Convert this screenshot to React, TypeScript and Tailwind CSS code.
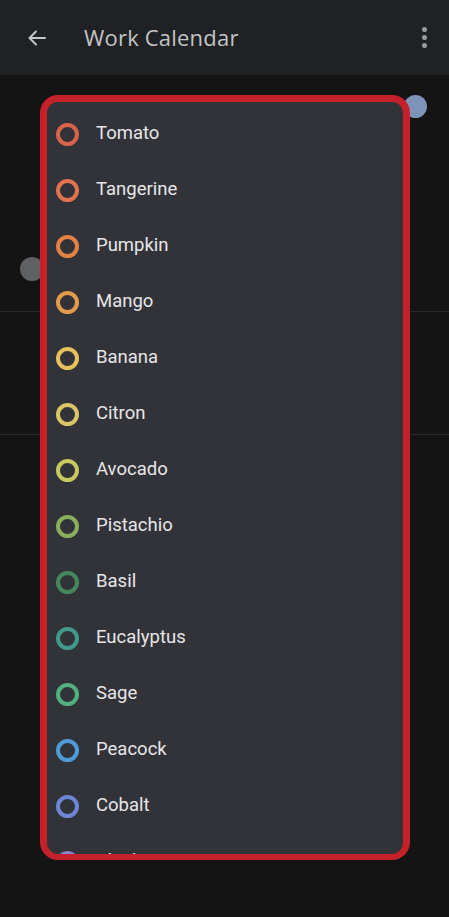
import React from "react";

const colors: [string, string][] = [
  ["Tomato", "#d9624a"],
  ["Tangerine", "#e2734f"],
  ["Pumpkin", "#e38044"],
  ["Mango", "#e39a4b"],
  ["Banana", "#e8c15c"],
  ["Citron", "#dcc566"],
  ["Avocado", "#c6c95e"],
  ["Pistachio", "#88b05c"],
  ["Basil", "#43895c"],
  ["Eucalyptus", "#3f9a8d"],
  ["Sage", "#50b07f"],
  ["Peacock", "#4d9bd8"],
  ["Cobalt", "#6d86d8"],
  ["Blueberry", "#8686cc"],
];

export default function App() {
  return (
    <div
      className="relative w-[449px] h-[917px] overflow-hidden bg-[#141414]"
      style={{ fontFamily: "Roboto, 'Noto Sans', sans-serif" }}
    >
      {/* Header */}
      <div className="h-[75px] bg-[#202124] flex items-center">
        <div className="w-[74px] flex items-center justify-center">
          <svg width="24" height="24" viewBox="0 0 24 24" fill="none">
            <path d="M20 12H5M11 5.5L4.5 12L11 18.5" stroke="#c4c7c5" strokeWidth="2" strokeLinecap="round" strokeLinejoin="round" />
          </svg>
        </div>
        <div className="ml-[10px] flex-1 text-[22px] text-[#c2c4c3] tracking-[0.2px]" style={{ fontFamily: "'Open Sans', Roboto, sans-serif" }}>
          Work Calendar
        </div>
        <div className="w-[48px] flex flex-col items-center gap-[3px] pr-[2px]">
          <span className="block w-[5px] h-[5px] rounded-full bg-[#9a9c9b]" />
          <span className="block w-[5px] h-[5px] rounded-full bg-[#9a9c9b]" />
          <span className="block w-[5px] h-[5px] rounded-full bg-[#9a9c9b]" />
        </div>
      </div>

      {/* Underlying page */}
      <div className="flex flex-col">
        <div className="h-[237px] border-b border-[#2a2a2b] flex flex-col">
          <div className="flex justify-end pt-[20px] pr-[22px]">
            <span className="block w-[23px] h-[23px] rounded-full bg-[#7e93b8]" />
          </div>
          <div className="flex pt-[139px] pl-[20px]">
            <span className="block w-[24px] h-[24px] rounded-full bg-[#5f6063]" />
          </div>
        </div>
        <div className="h-[123px] border-b border-[#2a2a2b]" />
      </div>

      {/* Popup with highlight */}
      <div className="absolute left-[40px] top-[95px] w-[370px] h-[765px] rounded-[18px] border-[7px] border-b-[6px] border-[#c4212b] bg-[#323338] overflow-hidden">
        <div className="flex flex-col pt-[4px]">
          {colors.map(([name, c]) => (
            <div key={name} className="h-[56px] flex items-center shrink-0">
              <span
                className="block w-[23px] h-[23px] rounded-full border-[4px] ml-[9px] shrink-0"
                style={{ borderColor: c }}
              />
              <span className="ml-[17px] text-[18.5px] text-[#e6e6e8]">{name}</span>
            </div>
          ))}
        </div>
      </div>
    </div>
  );
}
